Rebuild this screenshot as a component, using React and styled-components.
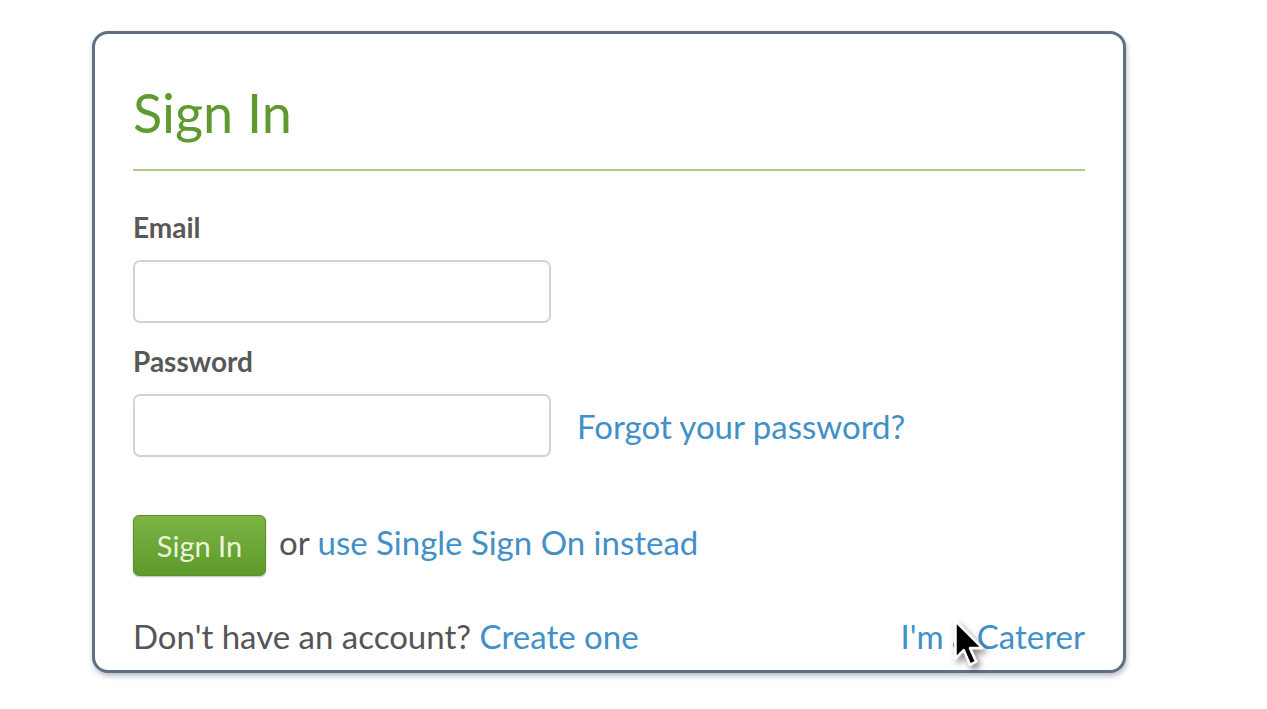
import styled, {createGlobalStyle} from 'styled-components';

const Global = createGlobalStyle`
  html, body {
    margin: 0;
    background: #fff;
    font-family: Lato, "Open Sans", sans-serif;
  }
`;

const Page = styled.div`
  position: relative;
  width: 1267px;
  height: 709px;
  padding: 31px 0 0 92px;
  box-sizing: border-box;
  overflow: hidden;
`;

const Card = styled.div`
  width: 1034px;
  height: 642px;
  box-sizing: border-box;
  border: 3px solid #5f6f86;
  border-radius: 16px;
  background: #fff;
  box-shadow: 1px 3px 5px rgba(60, 70, 90, 0.35);
  padding: 46px 38px 0 38px;
  display: flex;
  flex-direction: column;
`;

const Title = styled.h1`
  margin: 0;
  font-size: 54px;
  line-height: 65px;
  font-weight: 400;
  color: #5f9a30;
`;

const Rule = styled.div`
  height: 2px;
  background: #a9cb82;
  margin: 24px 0 40px 0;
`;

const Label = styled.label`
  font-size: 28px;
  line-height: 33px;
  font-weight: 700;
  color: #585858;
  margin-bottom: 16px;
  margin-top: ${p => p.$first ? '0' : '22px'};
`;

const Row = styled.div`
  display: flex;
  align-items: center;
  gap: 26px;
`;

const Input = styled.input`
  width: 418px;
  height: 63px;
  box-sizing: border-box;
  border: 2px solid #d3d3d3;
  border-radius: 7px;
  background: #fff;
  font-family: inherit;
  font-size: 24px;
  padding: 0 12px;
  outline: none;
`;

const A = styled.a`
  color: #4290c8;
  text-decoration: none;
  font-size: 33px;
  cursor: pointer;
`;

const Actions = styled.div`
  display: flex;
  align-items: center;
  gap: 13px;
  margin-top: 58px;
  font-size: 33px;
  line-height: 40px;
  color: #555;
`;

const Alt = styled.span`
  padding-bottom: 8px;
`;

const Button = styled.button`
  width: 133px;
  height: 61px;
  border: 1px solid #5a8f2c;
  border-radius: 6px;
  background: linear-gradient(#7cb446, #5c9a2a);
  color: #eaf5dc;
  font-family: inherit;
  font-size: 29px;
  cursor: pointer;
  box-shadow: 0 1px 2px rgba(0,0,0,0.25);
`;

const Footer = styled.div`
  display: flex;
  justify-content: space-between;
  align-items: baseline;
  margin-top: 40px;
  font-size: 33px;
  line-height: 40px;
  color: #555;
`;

const Cursor = styled.svg`
  position: absolute;
  left: 951px;
  top: 619px;
  filter: drop-shadow(3px 4px 3px rgba(0,0,0,0.45));
`;

export default function App() {
  return (
    <>
      <Global/>
      <Page>
        <Card>
          <Title>Sign In</Title>
          <Rule/>
          <Label $first>Email</Label>
          <Row><Input type="email"/></Row>
          <Label>Password</Label>
          <Row>
            <Input type="password"/>
            <A>Forgot your password?</A>
          </Row>
          <Actions>
            <Button>Sign In</Button>
            <Alt>or <A>use Single Sign On instead</A></Alt>
          </Actions>
          <Footer>
            <span>Don't have an account? <A>Create one</A></span>
            <A>I'm a Caterer</A>
          </Footer>
        </Card>
        <Cursor width="38" height="52" viewBox="0 0 34 50">
          <path d="M3 2 L3 38 L11 30 L17 44 L23 41 L17 28 L29 28 Z" fill="#000" stroke="#fff" strokeWidth="2.5" strokeLinejoin="round"/>
        </Cursor>
      </Page>
    </>
  );
}
